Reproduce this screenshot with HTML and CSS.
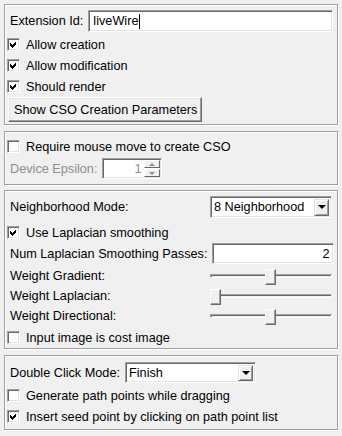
FILE: index.html
```html
<!DOCTYPE html>
<html lang="en">
<head>
    <meta charset="UTF-8">
    <title>CSO Live Wire Processor</title>
    <link rel="stylesheet" href="styles.css">
</head>
<body>
    <div class="group g1">
        <div class="row">
            <span class="label">Extension Id:</span>
            <div class="field grow">liveWire<span class="caret"></span></div>
        </div>
        <div class="check first"><span class="box"><svg viewBox="0 0 9 9"><polygon points="1,3 3,5 7,1 7,4 3,8 1,6"/></svg></span>Allow creation</div>
        <div class="check"><span class="box"><svg viewBox="0 0 9 9"><polygon points="1,3 3,5 7,1 7,4 3,8 1,6"/></svg></span>Allow modification</div>
        <div class="check"><span class="box"><svg viewBox="0 0 9 9"><polygon points="1,3 3,5 7,1 7,4 3,8 1,6"/></svg></span>Should render</div>
        <button class="btn">Show CSO Creation Parameters</button>
    </div>

    <div class="group g2">
        <div class="check"><span class="box"></span>Require mouse move to create CSO</div>
        <div class="row spin-row">
            <span class="label disabled">Device Epsilon:</span>
            <div class="spin">
                <div class="field spin-value">1</div>
                <div class="spin-buttons">
                    <span class="spin-btn"><i class="tri up"></i></span>
                    <span class="spin-btn"><i class="tri down"></i></span>
                </div>
            </div>
        </div>
    </div>

    <div class="group g3">
        <div class="row">
            <span class="label grow">Neighborhood Mode:</span>
            <div class="combo ctl">
                <span class="combo-text">8 Neighborhood</span>
                <span class="combo-btn"><i class="tri down dark"></i></span>
            </div>
        </div>
        <div class="check sep"><span class="box"><svg viewBox="0 0 9 9"><polygon points="1,3 3,5 7,1 7,4 3,8 1,6"/></svg></span>Use Laplacian smoothing</div>
        <div class="row">
            <span class="label grow">Num Laplacian Smoothing Passes:</span>
            <div class="field ctl num">2</div>
        </div>
        <div class="row slider-row first-slider">
            <span class="label grow">Weight Gradient:</span>
            <div class="slider ctl"><div class="groove"></div><span class="thumb" style="left: 55px"></span></div>
        </div>
        <div class="row slider-row">
            <span class="label grow">Weight Laplacian:</span>
            <div class="slider ctl"><div class="groove"></div><span class="thumb" style="left: 0px"></span></div>
        </div>
        <div class="row slider-row">
            <span class="label grow">Weight Directional:</span>
            <div class="slider ctl"><div class="groove"></div><span class="thumb" style="left: 55px"></span></div>
        </div>
        <div class="check last"><span class="box"></span>Input image is cost image</div>
    </div>

    <div class="group g4">
        <div class="row">
            <span class="label">Double Click Mode:</span>
            <div class="combo mode">
                <span class="combo-text">Finish</span>
                <span class="combo-btn"><i class="tri down dark"></i></span>
            </div>
        </div>
        <div class="check sep2"><span class="box"></span>Generate path points while dragging</div>
        <div class="check"><span class="box"><svg viewBox="0 0 9 9"><polygon points="1,3 3,5 7,1 7,4 3,8 1,6"/></svg></span>Insert seed point by clicking on path point list</div>
    </div>
</body>
</html>
```

FILE: styles.css
```css
body {
    margin: 0;
    padding: 4px;
    background-color: #f0f0f0;
    font-family: "Liberation Sans", Arial, sans-serif;
    font-size: 12.7px;
    color: #000;
}
.group {
    border: 1px solid #a0a0a0;
    box-shadow: inset 1px 1px 0 #fff, 1px 1px 0 #fff;
    padding: 5px 5px 2px 5px;
}
.g2 {
    margin-top: 6px;
    padding-top: 4px;
    padding-bottom: 5px;
}
.g3 {
    margin-top: 5px;
    padding-bottom: 0;
}
.g4 {
    margin-top: 6px;
    padding-top: 6px;
    padding-bottom: 2px;
}
.row {
    display: flex;
    align-items: center;
    gap: 5px;
}
.grow {
    flex: 1;
}
.label {
    white-space: nowrap;
}
.disabled {
    color: #8d8d8d;
}

/* sunken edit fields */
.field {
    height: 22px;
    box-sizing: border-box;
    border: 1px solid;
    border-color: #a0a0a0 #fff #fff #a0a0a0;
    box-shadow: inset 1px 1px 0 #696969, inset -1px -1px 0 #e3e3e3;
    background: #fff;
    padding: 0 4px;
    display: flex;
    align-items: center;
}
.g1 .field {
    margin-right: -1px;
}
.caret {
    display: inline-block;
    width: 1px;
    height: 15px;
    margin-left: 1px;
    background: #000;
}
.ctl {
    width: 122px;
    flex: none;
}
.num {
    height: 21px;
    justify-content: flex-end;
}

/* checkboxes */
.check {
    height: 21px;
    display: flex;
    align-items: center;
    margin-left: -3px;
}
.check.first {
    margin-top: 2px;
}
.check.sep {
    margin-top: 4px;
}
.check.last {
    margin-top: 1px;
}
.check.sep2 {
    margin-top: 2px;
}
.box {
    width: 13px;
    height: 13px;
    box-sizing: border-box;
    border: 1px solid;
    border-color: #a0a0a0 #fff #fff #a0a0a0;
    box-shadow: inset 1px 1px 0 #696969, inset -1px -1px 0 #e3e3e3;
    background: #fff;
    margin-right: 6px;
    padding: 1px;
    flex: none;
}
.box svg {
    display: block;
    width: 9px;
    height: 9px;
    shape-rendering: crispEdges;
}

/* push button */
.btn {
    display: block;
    margin-left: -2px;
    height: 25px;
    padding: 0 4px 0 5px;
    font: inherit;
    color: #000;
    background: #f0f0f0;
    border: 1px solid;
    border-color: #fff #696969 #696969 #fff;
    box-shadow: inset -1px -1px 0 #a0a0a0, inset 1px 1px 0 #e3e3e3;
}

/* spin box */
.spin-row {
    margin-top: 1px;
}
.spin {
    display: flex;
    width: 60px;
    height: 21px;
    position: relative;
}
.spin-value {
    width: 100%;
    height: 21px;
    justify-content: flex-end;
    padding-right: 20px;
    color: #8d8d8d;
}
.spin-buttons {
    position: absolute;
    right: 2px;
    top: 2px;
    width: 16px;
    display: flex;
    flex-direction: column;
}
.spin-btn {
    height: 8px;
    box-sizing: border-box;
    background: #f0f0f0;
    border: 1px solid;
    border-color: #fff #696969 #696969 #fff;
    display: flex;
    align-items: center;
    justify-content: center;
    margin-bottom: 1px;
}
.tri {
    width: 0;
    height: 0;
    border-left: 3px solid transparent;
    border-right: 3px solid transparent;
}
.tri.up {
    border-bottom: 3px solid #8d8d8d;
}
.tri.down {
    border-top: 3px solid #8d8d8d;
}
.tri.down.dark {
    border-left-width: 4px;
    border-right-width: 4px;
    border-top: 4px solid #000;
}

/* combo boxes */
.combo {
    height: 22px;
    box-sizing: border-box;
    border: 1px solid;
    border-color: #a0a0a0 #fff #fff #a0a0a0;
    box-shadow: inset 1px 1px 0 #696969, inset -1px -1px 0 #e3e3e3;
    background: #fff;
    display: flex;
    align-items: center;
    padding: 2px 2px 2px 3px;
}
.combo.mode {
    width: 131px;
    height: 21px;
}
.combo-text {
    flex: 1;
}
.combo-btn {
    width: 15px;
    height: 17px;
    box-sizing: border-box;
    background: #f0f0f0;
    border: 1px solid;
    border-color: #e3e3e3 #696969 #696969 #e3e3e3;
    box-shadow: inset 1px 1px 0 #fff, inset -1px -1px 0 #a0a0a0;
    display: flex;
    align-items: center;
    justify-content: center;
}
.combo.mode .combo-btn {
    height: 16px;
}

/* sliders */
.slider-row {
    height: 20px;
}
.first-slider {
    margin-top: 2px;
}
.slider {
    position: relative;
    height: 20px;
    display: flex;
    align-items: center;
}
.groove {
    flex: 1;
    height: 4px;
    box-sizing: border-box;
    border: 1px solid;
    border-color: #a0a0a0 #fff #fff #a0a0a0;
    box-shadow: inset 1px 1px 0 #696969;
}
.thumb {
    position: absolute;
    top: 3px;
    width: 11px;
    height: 16px;
    box-sizing: border-box;
    background: #f0f0f0;
    border: 1px solid;
    border-color: #fff #696969 #696969 #fff;
    box-shadow: inset -1px -1px 0 #a0a0a0;
}
```
